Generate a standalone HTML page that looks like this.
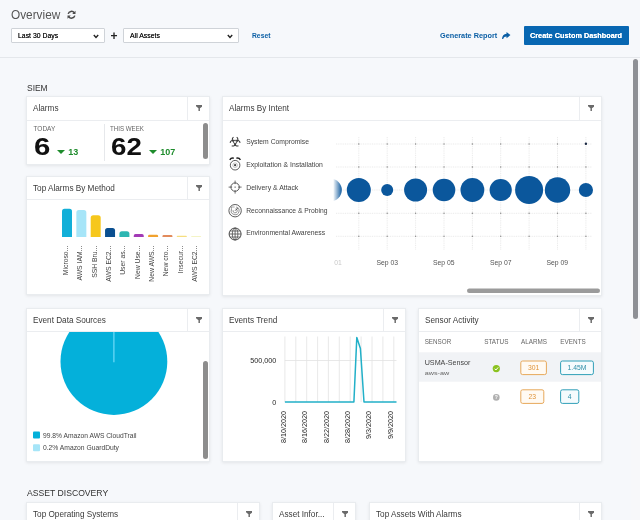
<!DOCTYPE html>
<html>
<head>
<meta charset="utf-8">
<style>
*{box-sizing:border-box;margin:0;padding:0}
html,body{width:640px;height:520px;overflow:hidden}
body{background:#f6f8fb;font-family:"Liberation Sans",sans-serif;color:#333;position:relative;font-size:8px}
.abs{position:absolute}
#w{position:absolute;left:0;top:0;width:640px;height:520px;will-change:transform}
.hd.h24{height:24px}.hd.h24 .fl{height:23px}
.t{position:absolute;white-space:nowrap;line-height:1}
.card{position:absolute;background:#fff;border:1px solid #e9ecef;box-shadow:0 1px 3px rgba(0,0,0,.08);overflow:hidden}
.hd{position:absolute;left:0;right:0;top:0;height:23px;border-bottom:1px solid #ebedf0;background:#fff;z-index:2}
.hd .ttl{position:absolute;left:6px;top:7.6px;font-size:8.2px;color:#3a3a3a;line-height:1;white-space:nowrap}
.hd .fl{position:absolute;right:0;top:0;width:22px;height:22px;border-left:1px solid #ebedf0}
.hd .fl svg{position:absolute;left:7.6px;top:7.6px}
.sel{position:absolute;height:15px;border:1px solid #cfd3d8;background:#fff;border-radius:1px}
.sel span{position:absolute;left:6px;top:3px;font-size:7.5px;color:#1a1a1a;line-height:1;text-shadow:0 0 .3px #222;transform:scaleX(.92);transform-origin:0 0}
.sel svg{position:absolute;right:5.5px;top:4.5px}
.sb{position:absolute;background:#8d8d8d;border-radius:3px}
</style>
</head>
<body>
<div id="w">
<!-- top bar -->
<div class="t" style="left:11px;top:9px;font-size:12px;color:#555;transform:scaleX(.985);transform-origin:0 0">Overview</div>
<svg class="abs" style="left:67px;top:9.800px" width="9" height="9.500" viewBox="0 0 9 9"><path d="M1.2 3.6A3.4 3.4 0 0 1 7.3 2.6M7.8 5.4A3.4 3.4 0 0 1 1.7 6.4" fill="none" stroke="#4a4a4a" stroke-width="1.500"/><path d="M8.500 0.500V3.800H5.200zM0.500 8.500V5.200H3.800z" fill="#4a4a4a"/></svg>

<div class="sel" style="left:11px;top:28px;width:94px"><span>Last 30 Days</span><svg width="6" height="5" viewBox="0 0 6 5"><path d="M0.8 1L3 3.4 5.2 1" fill="none" stroke="#222" stroke-width="1.4"/></svg></div>
<div class="t" style="left:110.5px;top:30px;font-size:12px;font-weight:bold;color:#222">+</div>
<div class="sel" style="left:123px;top:28px;width:116px"><span>All Assets</span><svg width="6" height="5" viewBox="0 0 6 5"><path d="M0.8 1L3 3.4 5.2 1" fill="none" stroke="#222" stroke-width="1.4"/></svg></div>
<div class="t" style="left:252px;top:32px;font-size:7.5px;font-weight:bold;color:#0b5fa5;transform:scaleX(.9);transform-origin:0 0">Reset</div>

<div class="t" style="left:440px;top:32px;font-size:7.3px;font-weight:bold;color:#0b5fa5">Generate Report</div>
<svg class="abs" style="left:502px;top:31.5px" width="8.5" height="7.5" viewBox="0 0 9 8"><path d="M4.8 0L9 3.3 4.800 6.600V4.800C3 4.800 1.800 5.600 1.200 7.600H0C0 4.300 1.800 2.100 4.800 1.900z" fill="#0b5fa5"/></svg>
<div class="abs" style="left:523.5px;top:26px;width:105px;height:19px;background:#0867b2;border-radius:1px"></div>
<div class="t" style="left:523px;width:106px;text-align:center;top:32px;font-size:7.3px;font-weight:bold;color:#fff;text-shadow:0 0 .5px #fff">Create Custom Dashboard</div>

<div class="abs" style="left:0;top:57px;width:640px;height:1px;background:#e4e7eb"></div>

<!-- page scrollbar -->
<div class="abs" style="left:631px;top:58px;width:9px;height:462px;background:#f7f8fa"></div>
<div class="sb" style="left:632.8px;top:59.2px;width:5.2px;height:260px;background:#8e9095"></div>

<div class="t" style="left:26.5px;top:82.5px;font-size:9.4px;color:#333;transform:scaleX(.9);transform-origin:0 0">SIEM</div>

<!-- Alarms card -->
<div class="card" style="left:26px;top:96px;width:184px;height:68.5px">
  <div class="hd h24"><div class="ttl">Alarms</div><div class="fl"><svg width="6.4" height="6.4" viewBox="0 0 7 7"><path d="M0 0H7V1.5L4.3 3.5V7H2.7V3.5L0 1.5z" fill="#6a6a6a"/></svg></div></div>
  <div class="t" style="left:6.5px;top:28.5px;font-size:6.5px;color:#666">TODAY</div>
  <div class="t" style="left:7px;top:39px;font-size:23.5px;font-weight:bold;color:#111;transform:scaleX(1.25);transform-origin:0 0">6</div>
  <svg class="abs" style="left:29.5px;top:52.5px" width="8" height="4" viewBox="0 0 8 4"><path d="M0 0H8L4 4z" fill="#1e8c2c"/></svg>
  <div class="t" style="left:41.3px;top:50.5px;font-size:9px;font-weight:bold;color:#1e8c2c">13</div>
  <div class="abs" style="left:76.5px;top:27px;width:1px;height:37px;background:#e6e8eb"></div>
  <div class="t" style="left:83px;top:28.5px;font-size:6.5px;color:#666;transform:scaleX(.95);transform-origin:0 0">THIS WEEK</div>
  <div class="t" style="left:84px;top:39px;font-size:23.5px;font-weight:bold;color:#111;transform:scaleX(1.18);transform-origin:0 0">62</div>
  <svg class="abs" style="left:121.5px;top:52.5px" width="8" height="4" viewBox="0 0 8 4"><path d="M0 0H8L4 4z" fill="#1e8c2c"/></svg>
  <div class="t" style="left:133.300px;top:50.5px;font-size:9px;font-weight:bold;color:#1e8c2c">107</div>
  <div class="sb" style="left:176px;top:25.500px;width:5px;height:36.500px"></div>
</div>

<!-- Top Alarms By Method -->
<div class="card" style="left:26px;top:176px;width:184px;height:119px">
  <div class="hd"><div class="ttl">Top Alarms By Method</div><div class="fl"><svg width="6.4" height="6.4" viewBox="0 0 7 7"><path d="M0 0H7V1.5L4.3 3.5V7H2.7V3.5L0 1.5z" fill="#6a6a6a"/></svg></div></div>
  <svg class="abs" style="left:0;top:0" width="184" height="119" viewBox="27.5 177.5 184 119" font-family="Liberation Sans, sans-serif" font-size="6.8" fill="#444">
    <path d="M62.50 237.5V211.80a2.50 2.50 0 0 1 2.50-2.50h5.00a2.50 2.50 0 0 1 2.50 2.50V237.5z" fill="#12afd8"/>
    <path d="M76.85 237.5V213.00a2.50 2.50 0 0 1 2.50-2.50h5.00a2.50 2.50 0 0 1 2.50 2.50V237.5z" fill="#a6e5f8"/>
    <path d="M91.20 237.5V218.30a2.50 2.50 0 0 1 2.50-2.50h5.00a2.50 2.50 0 0 1 2.50 2.50V237.5z" fill="#f6c71c"/>
    <path d="M105.55 237.5V231.00a2.50 2.50 0 0 1 2.50-2.50h5.00a2.50 2.50 0 0 1 2.50 2.50V237.5z" fill="#0a4f90"/>
    <path d="M119.90 237.5V234.30a2.50 2.50 0 0 1 2.50-2.50h5.00a2.50 2.50 0 0 1 2.50 2.50V237.5z" fill="#2db6b2"/>
    <path d="M134.25 237.5V236.34a1.74 1.74 0 0 1 1.74-1.74h6.52a1.74 1.74 0 0 1 1.74 1.74V237.5z" fill="#a23ab6"/>
    <path d="M148.60 237.5V236.62a1.32 1.32 0 0 1 1.32-1.32h7.36a1.32 1.32 0 0 1 1.32 1.32V237.5z" fill="#f1a22e"/>
    <path d="M162.95 237.5V236.74a1.14 1.14 0 0 1 1.14-1.14h7.72a1.14 1.14 0 0 1 1.14 1.14V237.5z" fill="#e28b5c"/>
    <path d="M177.30 237.5V237.02a0.72 0.72 0 0 1 0.72-0.72h8.56a0.72 0.72 0 0 1 0.72 0.72V237.5z" fill="#f6de80"/>
    <path d="M191.65 237.5V237.22a0.42 0.42 0 0 1 0.42-0.42h9.16a0.42 0.42 0 0 1 0.42 0.42V237.5z" fill="#f1f1b4"/>
    <g text-anchor="end">
      <text transform="translate(68.4 246.2) rotate(-90)">Microso...</text>
      <text transform="translate(82.8 246.2) rotate(-90)">AWS IAM...</text>
      <text transform="translate(97.1 246.2) rotate(-90)">SSH Bru...</text>
      <text transform="translate(111.5 246.2) rotate(-90)">AWS EC2...</text>
      <text transform="translate(125.8 246.2) rotate(-90)">User as...</text>
      <text transform="translate(140.2 246.2) rotate(-90)">New Use...</text>
      <text transform="translate(154.5 246.2) rotate(-90)">New AWS...</text>
      <text transform="translate(168.8 246.2) rotate(-90)">New cro...</text>
      <text transform="translate(183.2 246.2) rotate(-90)">Insecur...</text>
      <text transform="translate(197.6 246.2) rotate(-90)">AWS EC2...</text>
    </g>
  </svg>
</div>
<!-- Alarms By Intent -->
<div class="card" style="left:222px;top:96px;width:380px;height:199.5px">
  <div class="hd h24"><div class="ttl">Alarms By Intent</div><div class="fl"><svg width="6.4" height="6.4" viewBox="0 0 7 7"><path d="M0 0H7V1.5L4.3 3.5V7H2.7V3.5L0 1.5z" fill="#6a6a6a"/></svg></div></div>
  <svg class="abs" style="left:0;top:0" width="378" height="197" viewBox="223 97 378 197" font-family="Liberation Sans, sans-serif" font-size="7.3" fill="#444">
    <defs>
      <linearGradient id="fade" x1="0" x2="1" y1="0" y2="0"><stop offset="0" stop-color="#fff" stop-opacity="1"/><stop offset="1" stop-color="#fff" stop-opacity="0"/></linearGradient>
    </defs>
    <!-- grid -->
    <g stroke="#dcdcdc" stroke-width="0.6" stroke-dasharray="1 0.800">
      <path d="M336 144H592M336 167H592M336 190H592M336 213.300H592M336 236.300H592"/>
      <path d="M358.800 137V250M387.200 137V250M415.600 137V250M444 137V250M472.400 137V250M500.700 137V250M529.100 137V250M557.500 137V250M585.900 137V250"/>
    </g>
    <g fill="#8a8a8a"><circle cx="358.8" cy="144.0" r="0.7"/><circle cx="387.2" cy="144.0" r="0.7"/><circle cx="415.6" cy="144.0" r="0.7"/><circle cx="444.0" cy="144.0" r="0.7"/><circle cx="472.4" cy="144.0" r="0.7"/><circle cx="500.7" cy="144.0" r="0.7"/><circle cx="529.1" cy="144.0" r="0.7"/><circle cx="557.5" cy="144.0" r="0.7"/><circle cx="585.9" cy="144.0" r="0.7"/><circle cx="358.8" cy="167.0" r="0.7"/><circle cx="387.2" cy="167.0" r="0.7"/><circle cx="415.6" cy="167.0" r="0.7"/><circle cx="444.0" cy="167.0" r="0.7"/><circle cx="472.4" cy="167.0" r="0.7"/><circle cx="500.7" cy="167.0" r="0.7"/><circle cx="529.1" cy="167.0" r="0.7"/><circle cx="557.5" cy="167.0" r="0.7"/><circle cx="585.9" cy="167.0" r="0.7"/><circle cx="358.8" cy="213.3" r="0.7"/><circle cx="387.2" cy="213.3" r="0.7"/><circle cx="415.6" cy="213.3" r="0.7"/><circle cx="444.0" cy="213.3" r="0.7"/><circle cx="472.4" cy="213.3" r="0.7"/><circle cx="500.7" cy="213.3" r="0.7"/><circle cx="529.1" cy="213.3" r="0.7"/><circle cx="557.5" cy="213.3" r="0.7"/><circle cx="585.9" cy="213.3" r="0.7"/><circle cx="358.8" cy="236.3" r="0.7"/><circle cx="387.2" cy="236.3" r="0.7"/><circle cx="415.6" cy="236.3" r="0.7"/><circle cx="444.0" cy="236.3" r="0.7"/><circle cx="472.4" cy="236.3" r="0.7"/><circle cx="500.7" cy="236.3" r="0.7"/><circle cx="529.1" cy="236.3" r="0.7"/><circle cx="557.5" cy="236.3" r="0.7"/><circle cx="585.9" cy="236.3" r="0.7"/></g>
    <!-- bubbles -->
    <g fill="#0b579c">
      <circle cx="330.500" cy="190" r="11.300"/>
      <circle cx="358.800" cy="190" r="12"/>
      <circle cx="387.200" cy="190" r="6"/>
      <circle cx="415.600" cy="190" r="11.500"/>
      <circle cx="444" cy="190" r="11.300"/>
      <circle cx="472.400" cy="190" r="11.900"/>
      <circle cx="500.700" cy="190" r="11.100"/>
      <circle cx="529.100" cy="190" r="14"/>
      <circle cx="557.500" cy="190" r="12.700"/>
      <circle cx="585.900" cy="190" r="7.100"/>
      <circle cx="585.900" cy="143.800" r="1.200" fill="#1b2a45"/>
    </g>
    <rect x="333" y="176" width="9" height="28" fill="url(#fade)"/>
    <rect x="223" y="176" width="110.3" height="28" fill="#fff"/>
    <!-- labels -->
    <text x="246.200" y="143.7" textLength="62.8" lengthAdjust="spacingAndGlyphs">System Compromise</text>
    <text x="246.200" y="166.7" textLength="76.6" lengthAdjust="spacingAndGlyphs">Exploitation &amp; Installation</text>
    <text x="246.200" y="189.9" textLength="52.1" lengthAdjust="spacingAndGlyphs">Delivery &amp; Attack</text>
    <text x="246.200" y="212.9" textLength="81.3" lengthAdjust="spacingAndGlyphs">Reconnaissance &amp; Probing</text>
    <text x="246.200" y="235.1" textLength="79" lengthAdjust="spacingAndGlyphs">Environmental Awareness</text>
    <g font-size="6.8" text-anchor="middle" fill="#555">
      <text x="338" y="265" fill="#c8c8c8">01</text>
      <text x="387.300" y="265">Sep 03</text>
      <text x="443.800" y="265">Sep 05</text>
      <text x="500.800" y="265">Sep 07</text>
      <text x="557.300" y="265">Sep 09</text>
    </g>
    <rect x="467" y="288.600" width="133" height="4.400" rx="2.200" fill="#9b9b9b"/>
    <!-- icons -->
    <g fill="none" stroke="#4a4a4a" stroke-width="0.8" id="icons">
      <!-- biohazard -->
      <g transform="translate(235.100 141.900) scale(.94)" stroke="#3a3a3a">
        <g id="bh"><path d="M1.700 -5.100A3 3 0 1 1 -1.700 -5.100" stroke-width="1.150"/></g>
        <use href="#bh" transform="rotate(120)"/><use href="#bh" transform="rotate(240)"/>
        <circle r="1.800" stroke-width="0.800" fill="#fff"/>
        <circle r="0.500" fill="#3a3a3a" stroke="none"/>
      </g>
      <!-- alarm clock -->
      <g transform="translate(235.100 165.200)">
        <circle r="4.800" stroke-width="0.900"/><circle r="2.300" stroke-width="0.500" stroke="#888"/><circle r="1.100" fill="#444" stroke="none"/>
        <path d="M-5.300 -5.300Q-4 -7.600 -1.300 -7" stroke-width="1.500" stroke="#222"/>
        <path d="M5.300 -5.300Q4 -7.600 1.300 -7" stroke-width="1.500" stroke="#222"/>
      </g>
      <!-- crosshair -->
      <g transform="translate(235.100 187.100)">
        <circle r="4.200" stroke-width="0.900"/><circle r="0.700" fill="#4a4a4a" stroke="none"/>
        <path d="M-6.500 0H-3M6.500 0H3M0 -6.500V-3M0 6.500V3" stroke-width="0.800"/>
      </g>
      <!-- radar -->
      <g transform="translate(235.100 210.700)">
        <circle r="6.200" stroke-width="0.900"/>
        <path d="M-3.700 -1A3.900 3.900 0 1 0 1 -3.700" stroke-width="0.600"/>
        <path d="M-2 -0.500A2.100 2.100 0 1 0 0.500 -2" stroke-width="0.600"/>
        <path d="M0 0L2.800 -2.800" stroke-width="0.900"/>
        <path d="M-3.700 -3.700H-0.500M-3.700 -3.700V-0.500" stroke-width="0.500"/>
      </g>
      <!-- globe -->
      <g transform="translate(235.100 234)">
        <circle r="6" stroke-width="1"/>
        <ellipse rx="2.800" ry="6" stroke-width="0.800"/>
        <path d="M0 -6V6M-6 0H6M-5.200 -3H5.200M-5.200 3H5.200" stroke-width="0.800"/>
      </g>
    </g>
  </svg>
</div>
<!-- Event Data Sources -->
<div class="card" style="left:26px;top:308px;width:184px;height:154px">
  <div class="hd"><div class="ttl">Event Data Sources</div><div class="fl"><svg width="6.4" height="6.4" viewBox="0 0 7 7"><path d="M0 0H7V1.5L4.3 3.5V7H2.7V3.5L0 1.500z" fill="#6a6a6a"/></svg></div></div>
  <svg class="abs" style="left:0;top:0" width="182" height="152" viewBox="27 309 182 152" font-family="Liberation Sans, sans-serif" font-size="6.800" fill="#444">
    <circle cx="113.900" cy="361.500" r="53.400" fill="#04b0da"/>
    <path d="M113.900 362.300V300" stroke="#7adffb" stroke-width="1.100"/>
    <rect x="33" y="431.500" width="7" height="7" rx="1" fill="#04b0da"/>
    <text x="43" y="437.600" textLength="93.500" lengthAdjust="spacingAndGlyphs">99.8% Amazon AWS CloudTrail</text>
    <rect x="33" y="444.200" width="7" height="7" rx="1" fill="#a6e5f8"/>
    <text x="43" y="450.300" textLength="76" lengthAdjust="spacingAndGlyphs">0.2% Amazon GuardDuty</text>
    <rect x="203" y="361" width="5" height="98" rx="2.500" fill="#8d8d8d"/>
  </svg>
</div>

<!-- Events Trend -->
<div class="card" style="left:222px;top:308px;width:184px;height:154px">
  <div class="hd"><div class="ttl">Events Trend</div><div class="fl"><svg width="6.400" height="6.400" viewBox="0 0 7 7"><path d="M0 0H7V1.500L4.300 3.500V7H2.700V3.500L0 1.500z" fill="#6a6a6a"/></svg></div></div>
  <svg class="abs" style="left:0;top:0" width="182" height="152" viewBox="223 309 182 152" font-family="Liberation Sans, sans-serif" font-size="6.800" fill="#262626">
    <g stroke="#e2e2e2" stroke-width="0.800">
      <path d="M284.900 336.500V402M295.800 336.500V402M306.700 336.500V402M317.600 336.500V402M328.400 336.500V402M339.300 336.500V402M350.200 336.500V402M361.100 336.500V402M372 336.500V402M382.900 336.500V402M393.800 336.500V402"/>
      <path d="M284.900 360.500H396.500"/>
    </g>
    <path d="M284.900 402H353.900L356.800 337.600 360.400 348.400 364 402H396.500" fill="none" stroke="#22b0c8" stroke-width="1.500" stroke-linejoin="round"/>
    <g text-anchor="end" font-size="7.200">
      <text x="276.300" y="363">500,000</text>
      <text x="276.300" y="404.500">0</text>
    </g>
    <g text-anchor="end" font-size="7.200">
      <text transform="translate(285.500 411) rotate(-90)">8/10/2020</text>
      <text transform="translate(307.400 411) rotate(-90)">8/16/2020</text>
      <text transform="translate(328.600 411) rotate(-90)">8/22/2020</text>
      <text transform="translate(349.500 411) rotate(-90)">8/28/2020</text>
      <text transform="translate(371.100 411) rotate(-90)">9/3/2020</text>
      <text transform="translate(393 411) rotate(-90)">9/9/2020</text>
    </g>
  </svg>
</div>

<!-- Sensor Activity -->
<div class="card" style="left:418px;top:308px;width:184px;height:154px">
  <div class="hd"><div class="ttl">Sensor Activity</div><div class="fl"><svg width="6.400" height="6.400" viewBox="0 0 7 7"><path d="M0 0H7V1.500L4.300 3.500V7H2.700V3.500L0 1.500z" fill="#6a6a6a"/></svg></div></div>
  <svg class="abs" style="left:0;top:0" width="182" height="152" viewBox="419 309 182 152" font-family="Liberation Sans, sans-serif" font-size="6.300" fill="#666">
    <rect x="419" y="352.300" width="182" height="29.400" fill="#f1f3f6"/>
    <text x="424.700" y="344.100" textLength="26.500" lengthAdjust="spacingAndGlyphs">SENSOR</text>
    <text x="484.200" y="344.100" textLength="24.200" lengthAdjust="spacingAndGlyphs">STATUS</text>
    <text x="521" y="344.100" textLength="26" lengthAdjust="spacingAndGlyphs">ALARMS</text>
    <text x="560.300" y="344.100" textLength="25.500" lengthAdjust="spacingAndGlyphs">EVENTS</text>
    <text x="424.700" y="364.700" font-size="7.800" fill="#444" textLength="45.800" lengthAdjust="spacingAndGlyphs">USMA-Sensor</text>
    <text x="424.700" y="375.300" font-size="6.200" fill="#666" textLength="24.500" lengthAdjust="spacingAndGlyphs">aws-aw</text>
    <circle cx="496.300" cy="368.600" r="3.600" fill="#8bc220"/>
    <path d="M494.600 368.700L495.900 370 498.200 367.400" fill="none" stroke="#fff" stroke-width="1"/>
    <circle cx="496.300" cy="397.400" r="3.300" fill="#b0b0b0"/>
    <text x="496.300" y="399.300" font-size="5" font-weight="bold" fill="#fff" text-anchor="middle">?</text>
    <g fill="#fff" stroke-width="1">
      <rect x="520.800" y="361" width="25.600" height="13.600" rx="1.800" stroke="#e7a85a" fill="#fffaf3"/>
      <rect x="560.600" y="361" width="32.800" height="13.600" rx="1.800" stroke="#2f9fb8" fill="#f5fbfd"/>
      <rect x="520.800" y="389.800" width="23" height="13.600" rx="1.800" stroke="#e7a85a" fill="#fffaf3"/>
      <rect x="560.600" y="389.800" width="18.200" height="13.600" rx="1.800" stroke="#2f9fb8" fill="#f5fbfd"/>
    </g>
    <g font-size="6.800" text-anchor="middle">
      <text x="533.600" y="370.300" fill="#e0943a">301</text>
      <text x="577" y="370.300" fill="#2f8fa8">1.45M</text>
      <text x="532.300" y="399.100" fill="#e0943a">23</text>
      <text x="569.700" y="399.100" fill="#2f8fa8">4</text>
    </g>
  </svg>
</div>

<div class="t" style="left:26.500px;top:487.500px;font-size:9.400px;color:#333;transform:scaleX(.92);transform-origin:0 0">ASSET DISCOVERY</div>

<div class="card" style="left:26px;top:502px;width:234px;height:40px">
  <div class="hd"><div class="ttl" style="top:7.800px">Top Operating Systems</div><div class="fl"><svg width="6.400" height="6.400" viewBox="0 0 7 7"><path d="M0 0H7V1.500L4.300 3.500V7H2.700V3.500L0 1.500z" fill="#6a6a6a"/></svg></div></div>
</div>
<div class="card" style="left:272px;top:502px;width:84px;height:40px">
  <div class="hd"><div class="ttl" style="top:7.800px">Asset Infor...</div><div class="fl"><svg width="6.400" height="6.400" viewBox="0 0 7 7"><path d="M0 0H7V1.500L4.300 3.500V7H2.700V3.500L0 1.500z" fill="#6a6a6a"/></svg></div></div>
</div>
<div class="card" style="left:369px;top:502px;width:233px;height:40px">
  <div class="hd"><div class="ttl" style="top:7.800px">Top Assets With Alarms</div><div class="fl"><svg width="6.400" height="6.400" viewBox="0 0 7 7"><path d="M0 0H7V1.500L4.300 3.500V7H2.700V3.500L0 1.500z" fill="#6a6a6a"/></svg></div></div>
</div>
</div></body></html>
